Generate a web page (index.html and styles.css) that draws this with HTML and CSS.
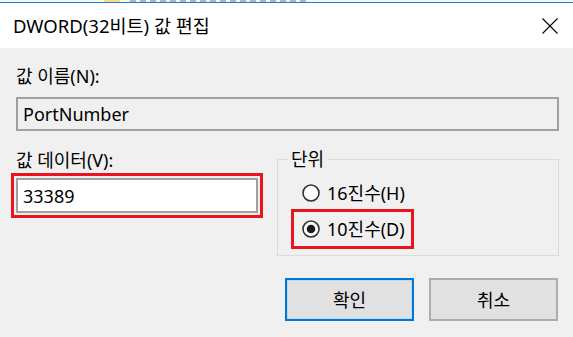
FILE: index.html
```html
<!DOCTYPE html>
<html lang="ko">
<head>
<meta charset="utf-8">
<title>DWORD(32비트) 값 편집</title>
<link rel="stylesheet" href="styles.css">
</head>
<body>
<div class="win">
  <div class="strip"><span class="strip-yellow"></span><span class="strip-dots"></span></div>
  <div class="titlebar">
    <span class="title">DWORD(32비트) 값 편집</span>
    <svg class="close" width="16" height="16" viewBox="0 0 16 16"><path d="M0.5 0.5 L15.5 15.5 M15.5 0.5 L0.5 15.5" stroke="#000" stroke-width="1.1" fill="none"/></svg>
  </div>
  <div class="content">
    <div class="label first">값 이름(N):</div>
    <div class="field readonly">PortNumber</div>
    <div class="row">
      <div class="col">
        <div class="label">값 데이터(V):</div>
        <div class="field edit marked">33389</div>
      </div>
      <fieldset class="group">
        <legend>단위</legend>
        <div class="opt">
          <svg class="radio" width="18" height="18" viewBox="0 0 18 18"><circle cx="9" cy="9" r="8" fill="#fff" stroke="#333" stroke-width="1.6"/></svg>
          <span>16진수(H)</span>
        </div>
        <div class="opt marked-box">
          <svg class="radio" width="18" height="18" viewBox="0 0 18 18"><circle cx="9" cy="9" r="8" fill="#fff" stroke="#333" stroke-width="1.6"/><circle cx="9" cy="9" r="4.3" fill="#1a1a1a"/></svg>
          <span>10진수(D)</span>
        </div>
      </fieldset>
    </div>
    <div class="buttons">
      <div class="btn default">확인</div>
      <div class="btn">취소</div>
    </div>
  </div>
</div>
</body>
</html>
```
FILE: styles.css
```css
* { box-sizing: border-box; }
html, body { margin: 0; padding: 0; }
body {
  width: 573px;
  height: 337px;
  overflow: hidden;
  background: #f0f0f0;
  font-family: "Noto Sans", "Noto Sans CJK KR", sans-serif;
  font-size: 18px;
  color: #000;
}
.win { width: 573px; height: 337px; display: flex; flex-direction: column; }
.strip {
  height: 3px;
  background: #f6f6f6;
  border-bottom: 1px solid #1883d7;
  display: flex;
}
.strip-yellow { margin-left: 104px; width: 16px; height: 2px; background: #f5dc90; }
.strip-dots {
  margin-left: 10px;
  width: 180px;
  height: 2px;
  background: repeating-linear-gradient(90deg, #8a8a8a 0 6px, #f6f6f6 6px 10px);
  opacity: 0.6;
}
.titlebar {
  height: 45px;
  background: #fff;
  display: flex;
  align-items: center;
  justify-content: space-between;
  padding: 0 15px 0 13px;
}
.title { font-size: 18.5px; line-height: 24px; }
.close { display: block; }
.content {
  flex: 1;
  padding: 16px 14px 0 16px;
}
.label { line-height: 24px; height: 24px; }
.field {
  height: 34px;
  border: 2px solid #a0a0a0;
  padding: 0 5px;
  display: flex;
  align-items: center;
  line-height: 24px;
}
.readonly { margin-top: 9px; background: #f0f0f0; }
.row {
  margin-top: 16px;
  display: grid;
  grid-template-columns: 242px 282px;
  column-gap: 19px;
  align-items: start;
}
.col { padding-top: 1px; }
.edit { margin-top: 6px; height: 35px; background: #fff; }
.marked { outline: 3px solid #e8141e; outline-offset: 2px; }
.group {
  margin: 0;
  border: 1px solid #dcdcdc;
  padding: 4px 10px 8px 10px;
  min-width: 0;
}
.group legend {
  padding: 0 3px;
  line-height: 24px;
}
.opt {
  height: 36px;
  display: flex;
  align-items: center;
  gap: 7px;
  margin-left: 3px;
  padding-left: 11px;
  width: 123px;
  line-height: 24px;
  white-space: nowrap;
}
.radio { display: block; flex: none; }
.marked-box {
  height: 40px;
  margin-top: -2px;
  margin-bottom: -2px;
  border: 3px solid #e8141e;
  padding-left: 8px;
}
.buttons {
  margin-top: 22px;
  display: flex;
  justify-content: flex-end;
  gap: 15px;
  padding-right: 1px;
}
.btn {
  width: 129px;
  height: 43px;
  background: #e1e1e1;
  border: 2px solid #adadad;
  display: flex;
  align-items: center;
  justify-content: center;
  line-height: 24px;
}
.btn.default { border-color: #0078d7; box-shadow: inset 0 0 0 1px #bcd9f2; }
```
